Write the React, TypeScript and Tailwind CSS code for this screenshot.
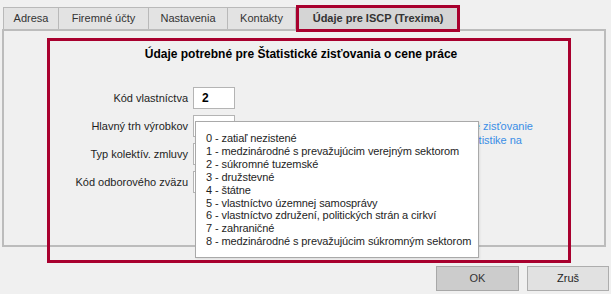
import React from "react";

const items = [
  "0 - zatiaľ nezistené",
  "1 - medzinárodné s prevažujúcim verejným sektorom",
  "2 - súkromné tuzemské",
  "3 - družstevné",
  "4 - štátne",
  "5 - vlastníctvo územnej samosprávy",
  "6 - vlastníctvo združení, politických strán a cirkví",
  "7 - zahraničné",
  "8 - medzinárodné s prevažujúcim súkromným sektorom",
];

function Tab({ label, w }: { label: string; w: string }) {
  return (
    <div
      className={`${w} h-[22px] -mr-px flex items-center justify-center border border-b-0 border-[#b9b9b9] bg-[#e3e3e3] text-[#333333]`}
    >
      {label}
    </div>
  );
}

export default function App() {
  return (
    <div
      className="relative w-[611px] h-[294px] bg-[#f0f0f0] text-[11px] leading-[13px] text-[#1e1e1e] overflow-hidden"
      style={{ fontFamily: '"Liberation Sans", Arial, sans-serif' }}
    >
      {/* tabs */}
      <div className="flex items-end pl-[3px] pt-[5px]">
        <Tab label="Adresa" w="w-[56px]" />
        <Tab label="Firemné účty" w="w-[91px]" />
        <Tab label="Nastavenia" w="w-[80px]" />
        <Tab label="Kontakty" w="w-[69px]" />
        <div className="relative z-10 ml-[1px] -mb-[3px] w-[164px] h-[27px] flex items-center justify-center border-[3px] border-[#a8002e] bg-[#d5d5d5] font-bold text-[#333333]">
          Údaje pre ISCP (Trexima)
        </div>
      </div>

      {/* panel */}
      <div className="ml-[2px] w-[604px] h-[218px] border-2 border-[#bcbcbc] bg-[#f0f0f0]">
        <div className="pt-[16px] text-center font-bold text-[12px] leading-[14px] text-black pr-[6px]">
          Údaje potrebné pre Štatistické zisťovania o cene práce
        </div>
        <div className="mt-[26px] flex flex-col gap-[6px]">
          <div className="flex items-center">
            <div className="w-[184px] text-right">Kód vlastníctva</div>
            <div className="ml-[5px] w-[42px] h-[22px] border border-[#b4b4b4] bg-white flex items-center pl-[8px] font-bold text-[12px] text-black">
              2
            </div>
          </div>
          <div className="flex items-start h-[22px]">
            <div className="w-[184px] h-[22px] flex items-center justify-end">Hlavný trh výrobkov</div>
            <div className="ml-[5px] w-[42px] h-[22px] border border-[#b4b4b4] bg-white" />
            <div className="ml-[10px] w-[288px] pt-[4px] text-right text-[#3a8ee6] leading-[14px] whitespace-nowrap">
              <div>Podrobnosti k údajom pre štatistické zisťovanie</div>
              <div className="pr-[11px]">nájdete v metodike o štatistike na</div>
            </div>
          </div>
          <div className="flex items-center">
            <div className="w-[184px] text-right">Typ kolektív. zmluvy</div>
            <div className="ml-[5px] w-[42px] h-[22px] border border-[#b4b4b4] bg-white" />
          </div>
          <div className="flex items-center">
            <div className="w-[184px] text-right">Kód odborového zväzu</div>
            <div className="ml-[5px] w-[42px] h-[22px] border border-[#b4b4b4] bg-white" />
          </div>
        </div>
      </div>

      {/* buttons */}
      <div className="flex justify-end gap-[8px] pr-[2px] mt-[19px]">
        <button className="w-[83px] h-[25px] border border-[#a8a8a8] bg-[#cccccc] text-[#333333]">
          OK
        </button>
        <button className="w-[82px] h-[25px] border border-[#adadad] bg-[#e1e1e1] text-[#1e1e1e]">
          Zruš
        </button>
      </div>

      {/* red highlight frame */}
      <div className="pointer-events-none absolute left-[47px] top-[38px] w-[524px] h-[225px] border-[3px] border-[#a8002e]" />

      {/* dropdown list */}
      <div className="absolute left-[195px] top-[121px] w-[284px] h-[137px] border border-[#a9a9a9] bg-white pl-[10px] pt-[10px] tracking-[-0.1px] shadow-[1px_1px_2px_rgba(0,0,0,0.08)]">
        {items.map((t) => (
          <div key={t} className="whitespace-nowrap text-[#1e1e1e] leading-[12.9px]">
            {t}
          </div>
        ))}
      </div>
    </div>
  );
}
